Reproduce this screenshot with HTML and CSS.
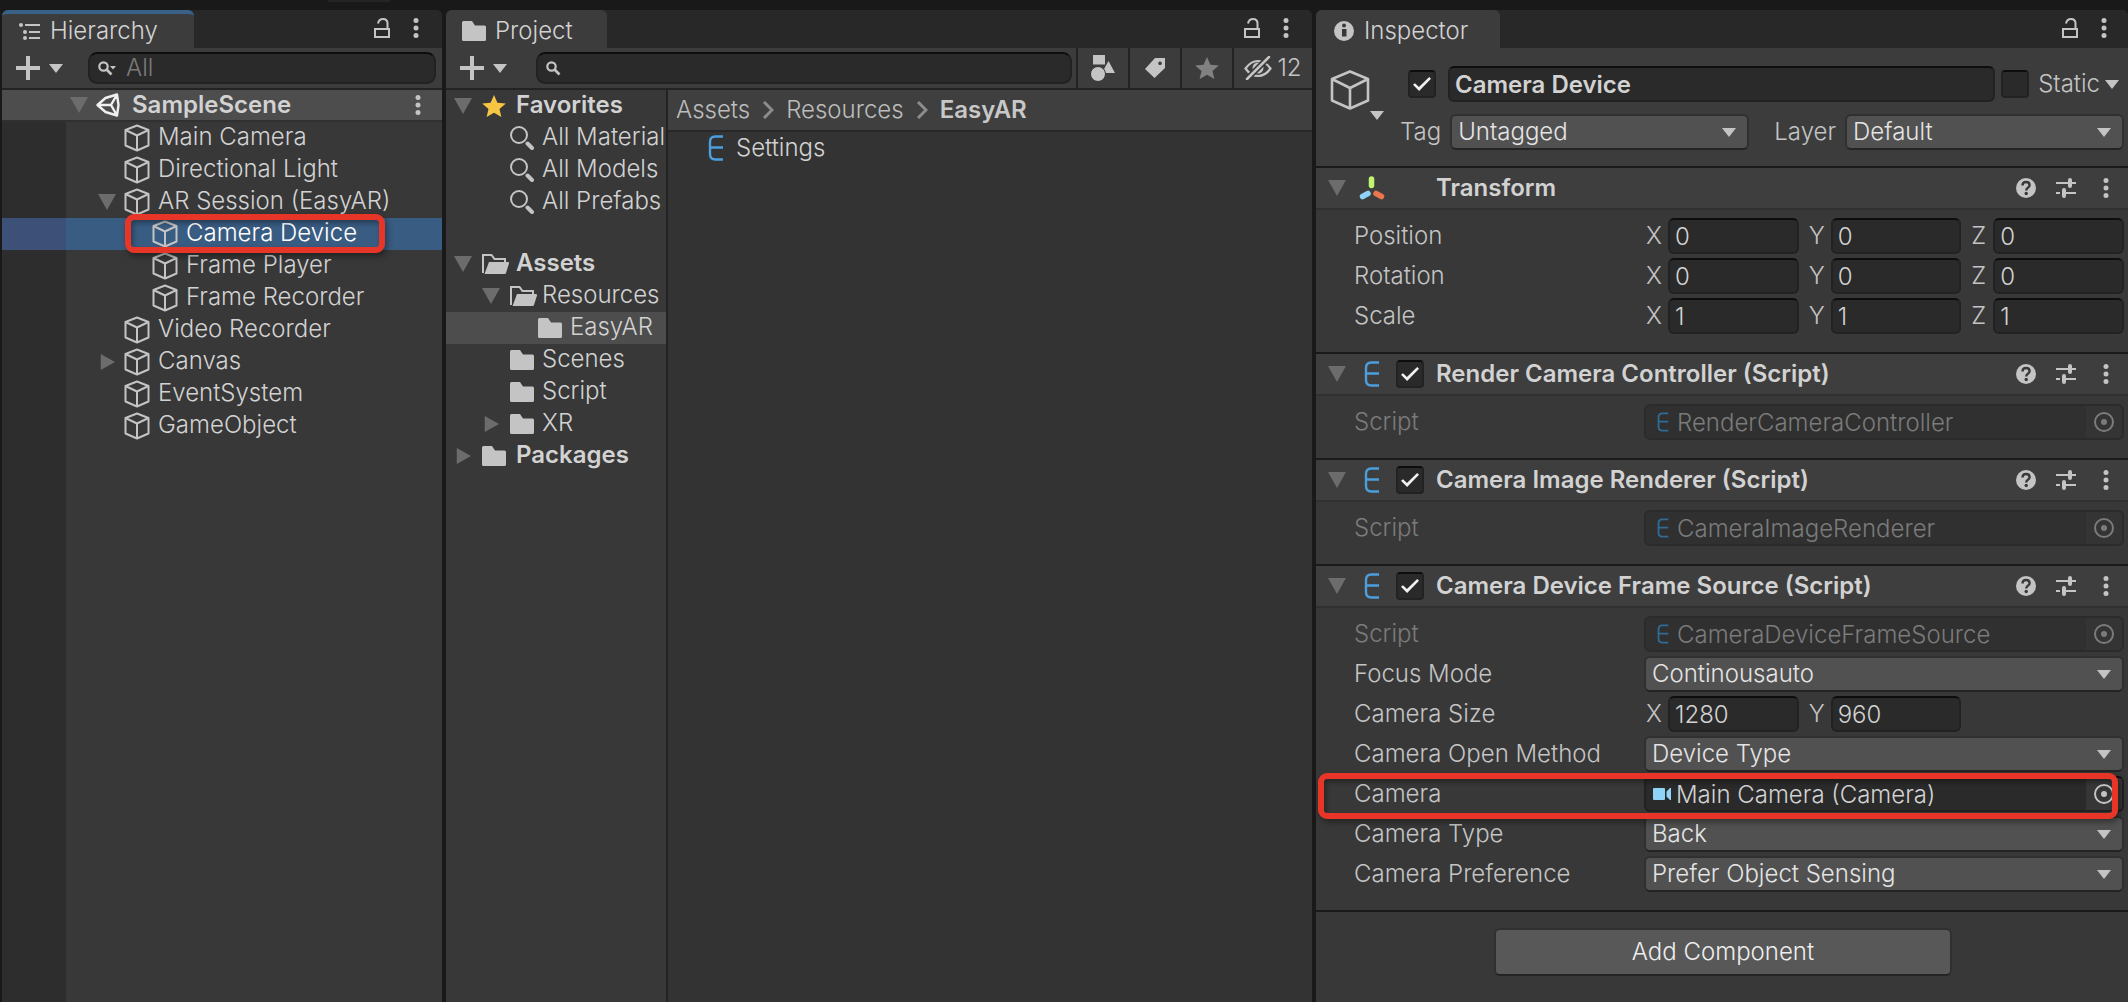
FILE: index.html
```html
<!DOCTYPE html>
<html lang="en">
<head>
<meta charset="utf-8">
<title>SampleScene</title>
<link rel="stylesheet" href="styles.css">
</head>
<body>
<svg class="sprite" aria-hidden="true">
  <symbol id="i-cube" viewBox="0 0 26 28"><path d="M13 1.500 24.500 6v15.500L13 26.500 1.500 21.500V6ZM1.500 6 13 11.500 24.500 6M13 11.500v15" fill="none" stroke="currentColor" stroke-width="2" stroke-linejoin="round"/></symbol>
  <symbol id="i-cube-big" viewBox="0 0 40 42"><path d="M20 2.500 38 10v21.500L20 39.500 2 31.500V10ZM2 10l18 9 18-9M20 19v20.500" fill="none" stroke="currentColor" stroke-width="2.600" stroke-linejoin="round"/></symbol>
  <symbol id="i-down" viewBox="0 0 18 16"><path d="M0 0h18L9 16Z" fill="currentColor"/></symbol>
  <symbol id="i-right" viewBox="0 0 18 18"><path d="M2 0v18l16-9Z" fill="currentColor"/></symbol>
  <symbol id="i-caret" viewBox="0 0 14 9"><path d="M0 0h14L7 9Z" fill="currentColor"/></symbol>
  <symbol id="i-plus" viewBox="0 0 24 24"><path d="M10 0h4v10h10v4H14v10h-4V14H0v-4h10Z" fill="currentColor"/></symbol>
  <symbol id="i-lock" viewBox="0 0 16 20"><path d="M1 11h14v8H1ZM4 5.500C4.500 3 6.500 1 9 1c3 0 4.500 2 4.500 4.500V11" fill="none" stroke="currentColor" stroke-width="2"/></symbol>
  <symbol id="i-dots" viewBox="0 0 6 20"><circle cx="3" cy="2.500" r="2.500" fill="currentColor"/><circle cx="3" cy="10" r="2.500" fill="currentColor"/><circle cx="3" cy="17.500" r="2.500" fill="currentColor"/></symbol>
  <symbol id="i-list" viewBox="0 0 22 18"><g fill="currentColor"><circle cx="2" cy="3" r="2"/><path d="M6 2h15v2H6ZM10 9h11v2H10ZM10 15h11v2H10Z"/><circle cx="6" cy="10" r="2"/><circle cx="6" cy="16" r="2"/></g></symbol>
  <symbol id="i-folder" viewBox="0 0 24 20"><path d="M0 1.500Q0 0 1.500 0H10l3 4.500h9.500Q24 4.500 24 6v12.500q0 1.500-1.500 1.500h-21Q0 20 0 18.500Z" fill="currentColor"/></symbol>
  <symbol id="i-folder-open" viewBox="0 0 28 20"><path d="M1 19V1h8.500l3 4H23v3" fill="none" stroke="currentColor" stroke-width="2"/><path d="M7 8h19q1.500 0 1 1.500L24 19q-.5 1-1.500 1H2.500Z" fill="currentColor"/></symbol>
  <symbol id="i-star" viewBox="0 0 24 22"><path d="m12 0 3.400 7.700 8.400.7-6.300 5.600 1.900 8L12 17.700 4.600 22l1.900-8L.2 8.400l8.400-.7Z" fill="currentColor"/></symbol>
  <symbol id="i-find" viewBox="0 0 24 24"><circle cx="9" cy="9" r="8" fill="none" stroke="currentColor" stroke-width="2"/><path d="m17.500 17.500 4.500 4.500" stroke="currentColor" stroke-width="4" stroke-linecap="round"/></symbol>
  <symbol id="i-search" viewBox="0 0 18 15"><circle cx="5.500" cy="5.500" r="4.200" fill="none" stroke="currentColor" stroke-width="2.200"/><path d="m8.500 8.500 5 5" stroke="currentColor" stroke-width="2.600"/></symbol>
  <symbol id="i-search-menu" viewBox="0 0 18 15"><circle cx="5.500" cy="5.500" r="4.200" fill="none" stroke="currentColor" stroke-width="2.200"/><path d="m8.500 8.500 5 5" stroke="currentColor" stroke-width="2.600"/><path d="M12 5h6l-3 3.500Z" fill="currentColor"/></symbol>
  <symbol id="i-unity" viewBox="0 0 24 24"><path d="m1.500 12 8-7 11.500-3.500 1.500 10.500L21 22.500 9.500 19ZM1.500 12H15M15 12l6-10.500M15 12l6 10.500" fill="none" stroke="currentColor" stroke-width="2.400" stroke-linejoin="round"/></symbol>
  <symbol id="i-e" viewBox="0 0 16 26"><path d="M15 1.500H7.500Q2 1.500 2 7v12q0 5.500 5.500 5.500H15M2 12.500h13" fill="none" stroke="currentColor" stroke-width="2.400"/></symbol>
  <symbol id="i-shapes" viewBox="0 0 24 26"><path d="M2 0h12v9.500H2ZM17.500 6 24 18h-9.500L13 14Z" fill="currentColor"/><circle cx="7" cy="19" r="7.500" fill="currentColor" stroke="#383838" stroke-width="1"/></symbol>
  <symbol id="i-tag" viewBox="0 0 20 20"><path fill-rule="evenodd" d="M10 0h10v10L9.500 20 0 11ZM15 3.500a1.800 1.800 0 1 0 .1 0Z" fill="currentColor"/></symbol>
  <symbol id="i-eye" viewBox="0 0 28 24"><path d="M1.500 12.500C5 7.500 9 5 14 5s9 2.500 12.500 7.500C23 17.500 19 20 14 20S5 17.500 1.500 12.500Z" fill="none" stroke="currentColor" stroke-width="2.200"/><circle cx="14" cy="12" r="5.500" fill="currentColor"/><path d="M3 23 25 1" stroke="#383838" stroke-width="6"/><path d="M3 23 25 1" stroke="currentColor" stroke-width="2.500" stroke-linecap="round"/></symbol>
  <symbol id="i-info" viewBox="0 0 20 20"><circle cx="10" cy="10" r="10" fill="currentColor"/><path d="M8 8h4.500v7.500H8Z" fill="#383838"/><circle cx="10" cy="4.500" r="2" fill="#383838"/></symbol>
  <symbol id="i-help" viewBox="0 0 20 20"><circle cx="10" cy="10" r="10" fill="currentColor"/><path d="M6.500 7.500C6.500 5.200 8 4 10 4s3.600 1.200 3.600 3.200c0 2.400-3.400 2.600-3.400 5.300" fill="none" stroke="#383838" stroke-width="2.400"/><circle cx="10.200" cy="15.500" r="1.700" fill="#383838"/></symbol>
  <symbol id="i-sliders" viewBox="0 0 20 20"><path d="M0 4h20v2H0ZM0 14h4v2H0ZM6 14h14v2H6Z" fill="currentColor"/><path d="M14 2v6M8 12v6" stroke="currentColor" stroke-width="4" stroke-linecap="round"/></symbol>
  <symbol id="i-axes" viewBox="0 0 26 24"><g stroke-width="5.500" stroke-linecap="round"><path d="M12.500 3v6.500" stroke="#c0f56f"/><path d="m3.500 20.500 5.500-3" stroke="#8fd3f6"/><path d="m17 17.500 5.500 3" stroke="#e9764c"/></g></symbol>
  <symbol id="i-target" viewBox="0 0 20 20"><circle cx="10" cy="10" r="9" fill="none" stroke="currentColor" stroke-width="2"/><circle cx="10" cy="10" r="3" fill="currentColor"/></symbol>
  <symbol id="i-video" viewBox="0 0 18 12"><path d="M0 1q0-1 1-1h10q1 0 1 1v10q0 1-1 1H1q-1 0-1-1ZM13.500 3.500 17 0h1v12h-1l-3.500-3.500Z" fill="currentColor"/></symbol>
  <symbol id="i-chevron" viewBox="0 0 12 18"><path d="m2 1 8 8-8 8" fill="none" stroke="currentColor" stroke-width="3"/></symbol>
</svg>

<div class="topbar"><span class="topbar-stub"></span></div>
<main class="editor">

  <section class="panel">
    <header class="tabs">
      <div class="tab tab-focused"><svg class="i22"><use href="#i-list"/></svg><span>Hierarchy</span></div>
      <div class="tab-tools">
        <button class="plain" aria-label="Lock"><svg class="lock"><use href="#i-lock"/></svg></button>
        <button class="plain" aria-label="Menu"><svg class="dots"><use href="#i-dots"/></svg></button>
      </div>
    </header>
    <div class="toolbar">
      <button class="plain add" aria-label="Create"><svg class="i24"><use href="#i-plus"/></svg><svg class="caret"><use href="#i-caret"/></svg></button>
      <label class="search"><svg class="i18"><use href="#i-search-menu"/></svg><input type="text" placeholder="All" aria-label="Search hierarchy"></label>
    </div>
    <div class="scene-row">
      <svg class="fold"><use href="#i-down"/></svg><svg class="unity"><use href="#i-unity"/></svg><b>SampleScene</b>
      <button class="plain" aria-label="Scene menu"><svg class="dots"><use href="#i-dots"/></svg></button>
    </div>
    <ul class="tree objects">
      <li class="lvl1"><span class="fold"></span><svg class="cube"><use href="#i-cube"/></svg><span>Main Camera</span></li>
      <li class="lvl1"><span class="fold"></span><svg class="cube"><use href="#i-cube"/></svg><span>Directional Light</span></li>
      <li class="lvl1"><svg class="fold"><use href="#i-down"/></svg><svg class="cube"><use href="#i-cube"/></svg><span>AR Session (EasyAR)</span></li>
      <li class="lvl2 active"><span class="fold"></span><svg class="cube"><use href="#i-cube"/></svg><span>Camera Device</span><i class="callout callout-object"></i></li>
      <li class="lvl2"><span class="fold"></span><svg class="cube"><use href="#i-cube"/></svg><span>Frame Player</span></li>
      <li class="lvl2"><span class="fold"></span><svg class="cube"><use href="#i-cube"/></svg><span>Frame Recorder</span></li>
      <li class="lvl1"><span class="fold"></span><svg class="cube"><use href="#i-cube"/></svg><span>Video Recorder</span></li>
      <li class="lvl1"><svg class="fold"><use href="#i-right"/></svg><svg class="cube"><use href="#i-cube"/></svg><span>Canvas</span></li>
      <li class="lvl1"><span class="fold"></span><svg class="cube"><use href="#i-cube"/></svg><span>EventSystem</span></li>
      <li class="lvl1"><span class="fold"></span><svg class="cube"><use href="#i-cube"/></svg><span>GameObject</span></li>
    </ul>
  </section>

  <section class="panel">
    <header class="tabs">
      <div class="tab tab-project"><svg class="folder"><use href="#i-folder"/></svg><span>Project</span></div>
      <div class="tab-tools">
        <button class="plain" aria-label="Lock"><svg class="lock"><use href="#i-lock"/></svg></button>
        <button class="plain" aria-label="Menu"><svg class="dots"><use href="#i-dots"/></svg></button>
      </div>
    </header>
    <div class="toolbar toolbar-project">
      <button class="plain add" aria-label="Create"><svg class="i24"><use href="#i-plus"/></svg><svg class="caret"><use href="#i-caret"/></svg></button>
      <label class="search"><svg class="i18"><use href="#i-search"/></svg><input type="text" aria-label="Search project"></label>
      <button class="tool" aria-label="Search by type"><svg class="shapes"><use href="#i-shapes"/></svg></button>
      <button class="tool" aria-label="Search by label"><svg class="i20"><use href="#i-tag"/></svg></button>
      <button class="tool dim" aria-label="Save search"><svg class="i24"><use href="#i-star"/></svg></button>
      <button class="tool tool-wide" aria-label="Hidden packages"><svg class="eye"><use href="#i-eye"/></svg>12</button>
    </div>
    <div class="browser">
      <nav class="folders">
        <ul class="tree">
          <li class="lvl0"><svg class="fold"><use href="#i-down"/></svg><svg class="slot fav"><use href="#i-star"/></svg><b>Favorites</b></li>
          <li class="lvl1"><span class="fold"></span><svg class="slot"><use href="#i-find"/></svg><span>All Materials</span></li>
          <li class="lvl1"><span class="fold"></span><svg class="slot"><use href="#i-find"/></svg><span>All Models</span></li>
          <li class="lvl1"><span class="fold"></span><svg class="slot"><use href="#i-find"/></svg><span>All Prefabs</span></li>
        </ul>
        <ul class="tree">
          <li class="lvl0"><svg class="fold"><use href="#i-down"/></svg><svg class="slot open"><use href="#i-folder-open"/></svg><b>Assets</b></li>
          <li class="lvl1"><svg class="fold"><use href="#i-down"/></svg><svg class="slot open"><use href="#i-folder-open"/></svg><span>Resources</span></li>
          <li class="lvl2 current"><span class="fold"></span><svg class="slot folder"><use href="#i-folder"/></svg><span>EasyAR</span></li>
          <li class="lvl1"><span class="fold"></span><svg class="slot folder"><use href="#i-folder"/></svg><span>Scenes</span></li>
          <li class="lvl1"><span class="fold"></span><svg class="slot folder"><use href="#i-folder"/></svg><span>Script</span></li>
          <li class="lvl1"><svg class="fold"><use href="#i-right"/></svg><svg class="slot folder"><use href="#i-folder"/></svg><span>XR</span></li>
          <li class="lvl0"><svg class="fold"><use href="#i-right"/></svg><svg class="slot folder"><use href="#i-folder"/></svg><b>Packages</b></li>
        </ul>
      </nav>
      <div class="files">
        <div class="crumbs">
          <a href="#assets">Assets</a><svg class="chev"><use href="#i-chevron"/></svg><a href="#resources">Resources</a><svg class="chev"><use href="#i-chevron"/></svg><b>EasyAR</b>
        </div>
        <div class="file"><svg class="e"><use href="#i-e"/></svg>Settings</div>
      </div>
    </div>
  </section>

  <section class="panel inspector">
    <header class="tabs">
      <div class="tab tab-inspector"><svg class="i20"><use href="#i-info"/></svg><span>Inspector</span></div>
      <div class="tab-tools">
        <button class="plain" aria-label="Lock"><svg class="lock"><use href="#i-lock"/></svg></button>
        <button class="plain" aria-label="Menu"><svg class="dots"><use href="#i-dots"/></svg></button>
      </div>
    </header>

    <div class="object">
      <button class="plain object-icon" aria-label="Object icon"><svg class="cube-big"><use href="#i-cube-big"/></svg><svg class="caret"><use href="#i-caret"/></svg></button>
      <div class="object-lines">
        <div class="object-line">
          <input class="check" type="checkbox" checked aria-label="Active">
          <input class="box name" type="text" value="Camera Device" aria-label="Name">
          <label class="static"><input class="check" type="checkbox">Static</label>
          <svg class="caret"><use href="#i-caret"/></svg>
        </div>
        <div class="object-line object-meta">
          <label for="tag">Tag</label>
          <div class="pick pick-tag"><select id="tag"><option>Untagged</option></select><svg class="caret"><use href="#i-caret"/></svg></div>
          <label for="layer">Layer</label>
          <div class="pick pick-layer"><select id="layer"><option>Default</option></select><svg class="caret"><use href="#i-caret"/></svg></div>
        </div>
      </div>
    </div>

    <article class="component">
      <header class="head">
        <svg class="fold"><use href="#i-down"/></svg><svg class="axes"><use href="#i-axes"/></svg><h2>Transform</h2>
        <button class="plain" aria-label="Help"><svg class="i20"><use href="#i-help"/></svg></button>
        <button class="plain" aria-label="Presets"><svg class="i20"><use href="#i-sliders"/></svg></button>
        <button class="plain" aria-label="More"><svg class="dots"><use href="#i-dots"/></svg></button>
      </header>
      <div class="props">
        <div class="prop"><span>Position</span><div class="vector">
          <label>X<input class="box" type="text" value="0"></label><label>Y<input class="box" type="text" value="0"></label><label>Z<input class="box" type="text" value="0"></label></div></div>
        <div class="prop"><span>Rotation</span><div class="vector">
          <label>X<input class="box" type="text" value="0"></label><label>Y<input class="box" type="text" value="0"></label><label>Z<input class="box" type="text" value="0"></label></div></div>
        <div class="prop"><span>Scale</span><div class="vector">
          <label>X<input class="box" type="text" value="1"></label><label>Y<input class="box" type="text" value="1"></label><label>Z<input class="box" type="text" value="1"></label></div></div>
      </div>
    </article>

    <article class="component">
      <header class="head">
        <svg class="fold"><use href="#i-down"/></svg><svg class="e"><use href="#i-e"/></svg><input class="check" type="checkbox" checked aria-label="Enable Render Camera Controller"><h2>Render Camera Controller (Script)</h2>
        <button class="plain" aria-label="Help"><svg class="i20"><use href="#i-help"/></svg></button>
        <button class="plain" aria-label="Presets"><svg class="i20"><use href="#i-sliders"/></svg></button>
        <button class="plain" aria-label="More"><svg class="dots"><use href="#i-dots"/></svg></button>
      </header>
      <div class="props">
        <div class="prop off"><label for="script1">Script</label><div class="box ref"><svg class="e-small"><use href="#i-e"/></svg><input id="script1" type="text" value="RenderCameraController" disabled><button class="plain" disabled aria-label="Pick"><svg class="i20"><use href="#i-target"/></svg></button></div></div>
      </div>
    </article>

    <article class="component">
      <header class="head">
        <svg class="fold"><use href="#i-down"/></svg><svg class="e"><use href="#i-e"/></svg><input class="check" type="checkbox" checked aria-label="Enable Camera Image Renderer"><h2>Camera Image Renderer (Script)</h2>
        <button class="plain" aria-label="Help"><svg class="i20"><use href="#i-help"/></svg></button>
        <button class="plain" aria-label="Presets"><svg class="i20"><use href="#i-sliders"/></svg></button>
        <button class="plain" aria-label="More"><svg class="dots"><use href="#i-dots"/></svg></button>
      </header>
      <div class="props">
        <div class="prop off"><label for="script2">Script</label><div class="box ref"><svg class="e-small"><use href="#i-e"/></svg><input id="script2" type="text" value="CameraImageRenderer" disabled><button class="plain" disabled aria-label="Pick"><svg class="i20"><use href="#i-target"/></svg></button></div></div>
      </div>
    </article>

    <article class="component">
      <header class="head">
        <svg class="fold"><use href="#i-down"/></svg><svg class="e"><use href="#i-e"/></svg><input class="check" type="checkbox" checked aria-label="Enable Camera Device Frame Source"><h2>Camera Device Frame Source (Script)</h2>
        <button class="plain" aria-label="Help"><svg class="i20"><use href="#i-help"/></svg></button>
        <button class="plain" aria-label="Presets"><svg class="i20"><use href="#i-sliders"/></svg></button>
        <button class="plain" aria-label="More"><svg class="dots"><use href="#i-dots"/></svg></button>
      </header>
      <div class="props">
        <div class="prop off"><label for="script3">Script</label><div class="box ref"><svg class="e-small"><use href="#i-e"/></svg><input id="script3" type="text" value="CameraDeviceFrameSource" disabled><button class="plain" disabled aria-label="Pick"><svg class="i20"><use href="#i-target"/></svg></button></div></div>
        <div class="prop"><label for="focus">Focus Mode</label><div class="pick"><select id="focus"><option>Continousauto</option></select><svg class="caret"><use href="#i-caret"/></svg></div></div>
        <div class="prop"><span>Camera Size</span><div class="vector">
          <label>X<input class="box" type="text" value="1280"></label><label>Y<input class="box" type="text" value="960"></label></div></div>
        <div class="prop"><label for="open">Camera Open Method</label><div class="pick"><select id="open"><option>Device Type</option></select><svg class="caret"><use href="#i-caret"/></svg></div></div>
        <div class="prop"><label for="cam">Camera</label><div class="box ref"><svg class="video"><use href="#i-video"/></svg><input id="cam" type="text" value="Main Camera (Camera)"><button class="plain" aria-label="Pick"><svg class="i20"><use href="#i-target"/></svg></button></div><i class="callout callout-prop"></i></div>
        <div class="prop"><label for="type">Camera Type</label><div class="pick"><select id="type"><option>Back</option></select><svg class="caret"><use href="#i-caret"/></svg></div></div>
        <div class="prop"><label for="pref">Camera Preference</label><div class="pick"><select id="pref"><option>Prefer Object Sensing</option></select><svg class="caret"><use href="#i-caret"/></svg></div></div>
      </div>
    </article>
    <div class="footer"><button class="add-component">Add Component</button></div>
  </section>
</main>
</body>
</html>
```
FILE: styles.css
```css
* { box-sizing: border-box; }

body {
  margin: 0;
  min-height: 100vh;
  display: flex;
  flex-direction: column;
  background: #191919;
  color: #d2d2d2;
  font: 350 24px/32px Inter, "Liberation Sans", sans-serif;
}

svg { display: block; flex: none; color: #c4c4c4; }
.sprite { display: none; }
ul { list-style: none; margin: 0; padding: 0; }
input, select, button { font: inherit; color: inherit; min-width: 0; margin: 0; border-radius: 0; }
b, h2 { font-weight: 600; }
h2 { font-size: 24px; margin: 0; }
a { color: inherit; text-decoration: none; }

.plain { background: none; border: 0; padding: 0; display: flex; align-items: center; }

/* icon sizes */
.i18 { width: 18px; height: 15px; }
.i20 { width: 20px; height: 20px; }
.i22 { width: 22px; height: 18px; }
.i24 { width: 24px; height: 24px; }
.lock { width: 16px; height: 20px; }
.dots { width: 6px; height: 20px; }
.caret { width: 14px; height: 9px; }
.fold { width: 18px; height: 16px; color: #6c6c6c; flex: none; }
.cube { width: 26px; height: 28px; }
.cube-big { width: 40px; height: 42px; }
.unity { width: 24px; height: 24px; color: #f0f0f0; }
.folder { width: 24px; height: 20px; }
.shapes { width: 24px; height: 26px; }
.eye { width: 28px; height: 24px; }
.chev { width: 12px; height: 18px; color: #8c8c8c; }
.e { width: 16px; height: 26px; color: #4b9fdd; }
.e-small { width: 12px; height: 20px; color: #2f6d97; }
.axes { width: 26px; height: 24px; }
.video { width: 18px; height: 12px; color: #8fd3f6; }

.topbar { height: 10px; display: flex; padding-left: 328px; flex: none; }
.topbar-stub { width: 62px; height: 2px; background: #242424; }

.editor {
  flex: 1;
  display: grid;
  grid-template-columns: 440fr 866fr 812fr;
  gap: 4px;
  padding-left: 2px;
}

.panel { min-width: 0; display: flex; flex-direction: column; background: #383838; border-radius: 6px 6px 0 0; }

/* tabs */
.tabs { height: 38px; display: flex; justify-content: space-between; background: #282828; border-radius: 6px 6px 0 0; flex: none; }
.tab { display: flex; align-items: center; gap: 9px; padding: 4px 36px 0 16px; background: #3c3c3c; border-radius: 6px 6px 0 0; }
.tab-focused { padding: 0 36px 0 17px; border-top: 4px solid #3a6187; }
.tab-project { padding-right: 34px; }
.tab-inspector { padding: 4px 32px 0 18px; gap: 10px; }
.tab-tools { display: flex; gap: 23px; padding: 0 23px 2px 0; }
.inspector .tab-tools { padding-right: 21px; }

/* toolbars */
.toolbar { height: 42px; display: flex; align-items: center; background: #3c3c3c; border-bottom: 2px solid #232323; padding: 0 6px 0 14px; flex: none; }
.toolbar-project { padding-right: 0; }
.add { gap: 9px; width: 72px; flex: none; }
.toolbar-project .add { width: 76px; }
.search {
  flex: 1;
  min-width: 0;
  height: 32px;
  display: flex;
  align-items: center;
  gap: 10px;
  padding-left: 8px;
  background: #2a2a2a;
  border: 2px solid #222;
  border-top-color: #0d0d0d;
  border-radius: 9px;
}
.search input { flex: 1; background: none; border: 0; padding: 0; outline: 0; height: 28px; }
.search input::placeholder { color: #7b7b7b; opacity: 1; }
.toolbar-project .search { margin-right: 4px; }
.tool { width: 52px; height: 40px; display: flex; align-items: center; justify-content: center; background: none; border: 0; border-left: 2px solid #232323; padding: 0; }
.tool-wide { width: 80px; gap: 5px; color: #c4c4c4; }
.dim svg { color: #818181; }

/* trees */
.scene-row {
  height: 32px;
  display: flex;
  align-items: center;
  padding: 0 21px 0 68px;
  background: #4d4d4d;
  border-bottom: 2px solid #303030;
  flex: none;
}
.scene-row .unity { margin: 0 12px 0 8px; }
.scene-row .plain { margin-left: auto; }

.tree li { height: 32px; display: flex; align-items: center; white-space: nowrap; }
.tree li > span, .tree b { padding-bottom: 2px; }
.objects { flex: 1; background: linear-gradient(90deg, #2d2d2d 64px, #383838 64px); }
.objects li { gap: 8px; }
.objects .lvl1 { padding-left: 96px; }
.objects .lvl2 { padding-left: 124px; }
.objects .active { position: relative; color: #fff; background: linear-gradient(90deg, #3d5078 64px, #395c82 64px); }

.callout { position: absolute; z-index: 1; border: 6px solid #e73527; border-radius: 9px; box-shadow: 2px 3px 6px rgba(0, 0, 0, 0.4), inset 2px 3px 5px rgba(0, 0, 0, 0.35); pointer-events: none; }
.callout-object { top: -4px; bottom: -3px; left: 123px; width: 260px; }
.callout-prop { inset: -3px 6px -7px -36px; }

/* project browser */
.browser { flex: 1; display: grid; grid-template-columns: 222px 1fr; }
.folders { overflow: hidden; border-right: 2px solid #232323; display: flex; flex-direction: column; gap: 30px; }
.folders li { gap: 8px; padding-left: 8px; }
.folders .slot { margin-left: 2px; }
.folders .lvl1 { padding-left: 36px; }
.folders .lvl2 { padding-left: 64px; }
.folders .current { background: #4d4d4d; }
.folders b { margin-left: 2px; }
.slot { width: 24px; height: 24px; }
.slot.folder { height: 20px; }
.slot.open { width: 28px; height: 20px; margin-right: -4px; }
.fav { color: #f7c544; }
.files { background: #333; min-width: 0; }
.crumbs { height: 42px; display: flex; align-items: center; gap: 12px; padding-left: 8px; background: #3f3f3f; border-bottom: 2px solid #282828; color: #bcbcbc; }
.crumbs b { color: #c8c8c8; }
.file { height: 32px; display: flex; align-items: center; gap: 12px; padding-left: 40px; }

/* inspector */
.object { height: 118px; display: flex; align-items: flex-start; gap: 24px; padding: 18px 4px 0 14px; background: #3c3c3c; flex: none; }
.object-icon { flex-direction: column; width: 54px; padding-top: 3px; align-items: flex-start; }
.object-icon .caret { align-self: flex-end; }
.object-lines { flex: 1; min-width: 0; display: flex; flex-direction: column; gap: 12px; }
.object-line { display: flex; align-items: center; height: 36px; color: #c4c4c4; }
.object-line > .caret { margin: 0 5px; }
.name { flex: 1; margin: 0 6px 0 12px; font-weight: 600; }
.static { display: flex; align-items: center; gap: 9px; }
.object-meta { gap: 9px; margin-left: -8px; }
.pick-tag { flex: 296; margin-right: 16px; }
.pick-layer { flex: 276; }

.check {
  appearance: none;
  width: 28px;
  height: 28px;
  flex: none;
  display: grid;
  place-items: center;
  background: #2a2a2a;
  border: 2px solid #222;
  border-top-color: #0d0d0d;
  border-radius: 4px;
}
.check:checked::before { content: ""; width: 18px; height: 14px; background: #f0f0f0; clip-path: polygon(0 56%, 11% 44%, 33% 72%, 90% 0, 100% 12%, 34% 100%); }

.box {
  height: 36px;
  padding: 0 5px;
  background: #2a2a2a;
  border: 2px solid #222;
  border-top-color: #0d0d0d;
  border-radius: 6px;
  color: #d2d2d2;
  outline: 0;
}

.pick { display: grid; align-items: center; min-width: 0; }
.pick > * { grid-area: 1 / 1; }
.pick select {
  appearance: none;
  width: 100%;
  height: 36px;
  padding: 0 32px 2px 6px;
  background: #515151;
  border: 2px solid #303030;
  border-bottom-color: #242424;
  border-radius: 6px;
  color: #e4e4e4;
}
.pick .caret { justify-self: end; margin-right: 13px; pointer-events: none; }

.component { border-top: 2px solid #1a1a1a; }
.head { height: 42px; display: flex; align-items: center; padding: 0 19px 0 12px; background: #3e3e3e; border-bottom: 2px solid #303030; }
.head .axes { margin: 0 51px 0 13px; }
.head .e { margin: 0 16px 0 18px; }
.head .check { margin-right: 12px; }
.head h2 { flex: 1; color: #d2d2d2; white-space: nowrap; }
.head .plain + .plain { margin-left: 20px; }
.head .plain:last-child { margin-left: 27px; }

.props { display: flex; flex-direction: column; gap: 4px; padding: 8px 4px 18px 38px; }
.prop { position: relative; display: grid; grid-template-columns: 290px 1fr; align-items: center; height: 36px; color: #c4c4c4; }
.vector { display: grid; grid-template-columns: repeat(3, 1fr); gap: 8px; }
.vector label { display: grid; grid-template-columns: 22px 1fr; align-items: center; padding-left: 2px; min-width: 0; }
.ref { display: flex; align-items: center; gap: 8px; padding: 0; padding-left: 7px; overflow: hidden; }
.ref input { flex: 1; background: none; border: 0; padding: 2px 0 0; outline: 0; height: 32px; }
.ref .plain { width: 36px; height: 32px; justify-content: center; background: #363636; }
.ref .e-small { margin-left: 4px; }
.ref .video { margin-right: -3px; }
.off, .off input { color: #7b7b7b; }
.off .box { background: #303030; border-color: #2b2b2b; }
.off .plain { background: #343434; }
.off .plain svg { color: #7b7b7b; }

.footer { display: flex; justify-content: center; padding: 16px 2px 16px 4px; border-top: 2px solid #1a1a1a; }
.add-component { width: 458px; height: 48px; background: #585858; border: 2px solid #303030; border-bottom-color: #242424; border-radius: 6px; color: #eee; padding: 0; }
```
